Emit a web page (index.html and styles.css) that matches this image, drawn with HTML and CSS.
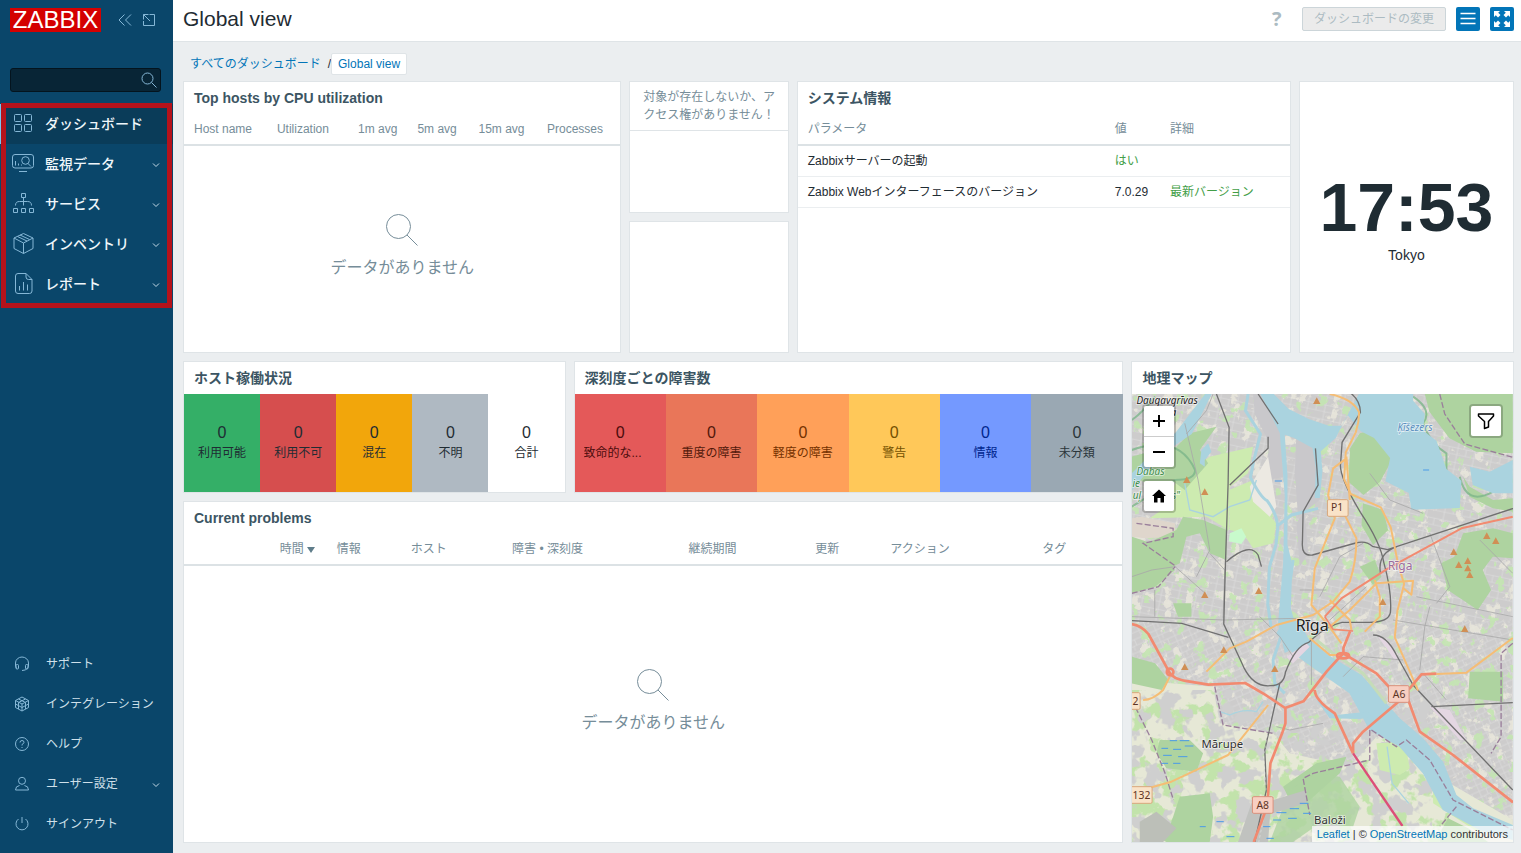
FILE: index.html
```html
<!DOCTYPE html>
<html lang="ja">
<head>
<meta charset="utf-8">
<title>Global view</title>
<link rel="stylesheet" href="styles.css">
</head>
<body>
<aside class="sidebar">
  <div class="brand">
    <a class="logo" href="#">ZABBIX</a>
    <button class="brand-btn" aria-label="サイドバーを折りたたむ"><svg width="14" height="12" viewBox="0 0 14 12"><path d="M6.500.5 1 6l5.500 5.500M13 .5 7.500 6l5.500 5.500"/></svg></button>
    <button class="brand-btn" aria-label="サイドバーを隠す"><svg width="14" height="14" viewBox="0 0 14 14"><path d="M7.500 1.500h5v11h-11V8M1.500 6.500v-5h5M1.500 1.500l6.500 6.500"/></svg></button>
  </div>
  <form class="search">
    <input class="search-input" type="text" aria-label="検索">
    <button class="search-btn" type="button" aria-label="検索"><svg width="16" height="16" viewBox="0 0 16 16"><circle cx="6.500" cy="6.500" r="5.500"/><path d="m10.500 10.500 5 5"/></svg></button>
  </form>
  <nav class="menu">
    <a class="menu-item active" href="#"><svg class="ico" viewBox="0 0 24 24"><rect x="3.500" y="2.500" width="7" height="7" rx="1"/><rect x="13.500" y="2.500" width="7" height="7" rx="1"/><rect x="3.500" y="12.500" width="7" height="7" rx="1"/><rect x="13.500" y="12.500" width="7" height="7" rx="1"/></svg><span>ダッシュボード</span></a>
    <a class="menu-item" href="#"><svg class="ico" viewBox="0 0 24 24"><rect x="1.500" y="2.500" width="21" height="13.500" rx="2.500"/><path d="M8 19.500h8M4.500 9v4.500M7.500 11.500v2M10.500 12.500v1M17 11.500l3 3"/><circle cx="14.500" cy="8.500" r="3.800"/></svg><span>監視データ</span><svg class="chev" viewBox="0 0 8 8"><path d="m1 3.500 3 3 3-3"/></svg></a>
    <a class="menu-item" href="#"><svg class="ico" viewBox="0 0 24 24"><path d="M10.500 1.500h4v4h-4zM2.500 16.500h4v4h-4zM10.500 16.500h4v4h-4zM18.500 16.500h4v4h-4zM12.500 5.500v8M4.500 13.500c0-3 1.500-4 4-4h8c2.500 0 4 1 4 4"/></svg><span>サービス</span><svg class="chev" viewBox="0 0 8 8"><path d="m1 3.500 3 3 3-3"/></svg></a>
    <a class="menu-item" href="#"><svg class="ico" viewBox="0 0 24 24"><path d="m12.500 1.500 9.500 4.500v10.500l-9.500 5-9.500-5V6zM3 6l9.500 5L22 6M12.500 11v10.500M6.500 4.500l9.500 4.500M9 3l9.500 4.500"/></svg><span>インベントリ</span><svg class="chev" viewBox="0 0 8 8"><path d="m1 3.500 3 3 3-3"/></svg></a>
    <a class="menu-item" href="#"><svg class="ico" viewBox="0 0 24 24"><path d="M15 1.500H7Q4.500 1.500 4.500 4v15q0 2.500 2.500 2.500h11.500q2.500 0 2.500-2.500V7.500zM15 1.500V5q0 2.500 2.500 2.500H21M8.500 14v4.500M12.500 10v8.500M16.500 12.500v6"/></svg><span>レポート</span><svg class="chev" viewBox="0 0 8 8"><path d="m1 3.500 3 3 3-3"/></svg></a>
  </nav>
  <nav class="menu-user">
    <a class="user-item" href="#"><svg class="ico-s" viewBox="0 0 16 16"><path d="M2.500 12.500Q1 10.500 1.500 7a6.500 6 0 0 1 13 0q.5 3.500-1 5.500M13.500 12q-1 2.500-5.500 2.500"/><rect x="2" y="8.500" width="2.500" height="4.500" rx="1"/><rect x="11.500" y="8.500" width="2.500" height="4.500" rx="1"/></svg><span>サポート</span></a>
    <a class="user-item" href="#"><svg class="ico-s" viewBox="0 0 16 16"><path d="m8 1 6.500 3.500v7L8 15l-6.500-3.500v-7zM1.500 4.500 8 8l6.500-3.500M8 8v7M4.500 3l7 3.500v6.500M11.500 3l-7 3.500v6.500M1.500 8 8 11.500 14.500 8"/></svg><span>インテグレーション</span></a>
    <a class="user-item" href="#"><svg class="ico-s" viewBox="0 0 16 16"><circle cx="8" cy="8" r="6.500"/><path d="M6 6.500Q6 4.500 8 4.500t2 1.800Q10 7.500 8 8.500v1M8 11v1"/></svg><span>ヘルプ</span></a>
    <a class="user-item" href="#"><svg class="ico-s" viewBox="0 0 16 16"><circle cx="8" cy="4.800" r="3.500"/><path d="M5.500 9.500q-4 .5-4 4.500h13q0-4-4-4.500"/></svg><span>ユーザー設定</span><svg class="chev" viewBox="0 0 8 8"><path d="m1 3.500 3 3 3-3"/></svg></a>
    <a class="user-item" href="#"><svg class="ico-s" viewBox="0 0 16 16"><path d="M4.500 3a6 6 0 1 0 7 0M8 1v6"/></svg><span>サインアウト</span></a>
  </nav>
</aside>

<main class="main">
  <header class="top">
    <h1 class="page-title">Global view</h1>
    <a class="help" href="#">?</a>
    <button class="edit" disabled>ダッシュボードの変更</button>
    <button class="tool" aria-label="アクション"><svg width="16" height="14" viewBox="0 0 16 14"><path d="M.5 1.500h15M.5 6.500h15M.5 11.500h15" stroke="#fff" stroke-width="1.500"/></svg></button>
    <button class="tool" aria-label="キオスクモード"><svg width="16" height="16" viewBox="0 0 16 16" fill="#fff"><path d="M0 0h6L4.200 1.800 6.500 4 4 6.500 1.800 4.200 0 6zM16 0v6l-1.800-1.800L12 6.500 9.500 4l2.300-2.200L10 0zM0 16v-6l1.800 1.800L4 9.500 6.500 12l-2.300 2.200L6 16zM16 16h-6l1.800-1.800L9.500 12 12 9.500l2.200 2.300L16 10z"/></svg></button>
  </header>
  <div class="crumbs"><a href="#">すべてのダッシュボード</a><span>/</span><a class="crumb-now" href="#">Global view</a></div>

  <div class="grid">
    <section class="widget w-top">
      <h2 class="w-title">Top hosts by CPU utilization</h2>
      <table class="list t-hosts">
        <colgroup><col class="h1"><col class="h2"><col class="h3"><col class="h4"><col class="h5"><col></colgroup>
        <thead><tr><th>Host name</th><th>Utilization</th><th>1m avg</th><th>5m avg</th><th>15m avg</th><th>Processes</th></tr></thead>
      </table>
      <div class="nodata"><svg width="32" height="32" viewBox="0 0 32 32"><circle cx="12.500" cy="12.500" r="12"/><path d="m21 21 10.500 10.500"/></svg><p>データがありません</p></div>
    </section>

    <section class="widget w-msg"><p class="msg">対象が存在しないか、アクセス権がありません！</p></section>
    <section class="widget w-blank"></section>

    <section class="widget w-sys">
      <h2 class="w-title">システム情報</h2>
      <table class="list t-sys">
        <colgroup><col class="s1"><col class="s2"><col></colgroup>
        <thead><tr><th>パラメータ</th><th>値</th><th>詳細</th></tr></thead>
        <tbody>
          <tr><td>Zabbixサーバーの起動</td><td class="ok">はい</td><td></td></tr>
          <tr><td>Zabbix Webインターフェースのバージョン</td><td>7.0.29</td><td class="ok">最新バージョン</td></tr>
        </tbody>
      </table>
    </section>

    <section class="widget w-clock"><time class="time">17:53</time><span class="zone">Tokyo</span></section>

    <section class="widget w-avail">
      <h2 class="w-title">ホスト稼働状況</h2>
      <div class="tiles">
        <div class="tile av-ok"><b>0</b><span>利用可能</span></div>
        <div class="tile av-no"><b>0</b><span>利用不可</span></div>
        <div class="tile av-mix"><b>0</b><span>混在</span></div>
        <div class="tile av-unk"><b>0</b><span>不明</span></div>
        <div class="tile"><b>0</b><span>合計</span></div>
      </div>
    </section>

    <section class="widget w-sev">
      <h2 class="w-title">深刻度ごとの障害数</h2>
      <div class="tiles">
        <div class="tile sv-5"><b>0</b><span>致命的な...</span></div>
        <div class="tile sv-4"><b>0</b><span>重度の障害</span></div>
        <div class="tile sv-3"><b>0</b><span>軽度の障害</span></div>
        <div class="tile sv-2"><b>0</b><span>警告</span></div>
        <div class="tile sv-1"><b>0</b><span>情報</span></div>
        <div class="tile sv-0"><b>0</b><span>未分類</span></div>
      </div>
    </section>

    <section class="widget w-prob">
      <h2 class="w-title">Current problems</h2>
      <table class="list t-prob">
        <colgroup><col class="p1"><col class="p2"><col class="p3"><col class="p4"><col class="p5"><col class="p6"><col class="p7"><col></colgroup>
        <thead><tr><th class="sorted">時間<i class="arrow"></i></th><th>情報</th><th>ホスト</th><th>障害 • 深刻度</th><th>継続期間</th><th>更新</th><th>アクション</th><th>タグ</th></tr></thead>
      </table>
      <div class="nodata"><svg width="32" height="32" viewBox="0 0 32 32"><circle cx="12.500" cy="12.500" r="12"/><path d="m21 21 10.500 10.500"/></svg><p>データがありません</p></div>
    </section>

    <section class="widget w-map">
      <h2 class="w-title">地理マップ</h2>
      <div class="map">
        <svg class="map-canvas" viewBox="6 12 1143 1344" preserveAspectRatio="xMidYMid slice">
          <defs>
            <filter id="fleck-pale" x="0" y="0" width="100%" height="100%" color-interpolation-filters="sRGB"><feTurbulence type="fractalNoise" baseFrequency=".03" numOctaves="4" seed="4"/><feColorMatrix values="0 0 0 0 .93  0 0 0 0 .92  0 0 0 0 .87  10 0 0 0 -5.800"/></filter>
            <filter id="fleck-green" x="0" y="0" width="100%" height="100%" color-interpolation-filters="sRGB"><feTurbulence type="fractalNoise" baseFrequency=".03" numOctaves="4" seed="11"/><feColorMatrix values="0 0 0 0 .77  0 0 0 0 .9  0 0 0 0 .7  0 14 0 0 -8.600"/></filter>
            <filter id="fleck-rural" x="0" y="0" width="100%" height="100%" color-interpolation-filters="sRGB"><feTurbulence type="fractalNoise" baseFrequency=".018" numOctaves="4" seed="23"/><feColorMatrix values="0 0 0 0 .76  0 0 0 0 .89  0 0 0 0 .67  0 12 0 0 -6"/></filter>
            <filter id="fleck-town" x="0" y="0" width="100%" height="100%" color-interpolation-filters="sRGB"><feTurbulence type="fractalNoise" baseFrequency=".022" numOctaves="3" seed="31"/><feColorMatrix values="0 0 0 0 .81  0 0 0 0 .81  0 0 0 0 .81  12 0 0 0 -6.200"/></filter>
            <pattern id="streets" width="46" height="38" patternUnits="userSpaceOnUse" patternTransform="rotate(-24)"><path d="M0 6h46M0 24h46M8 0v38M30 6v18M20 24v14" stroke="#dcdcdc" stroke-width="2" fill="none"/></pattern>
            <pattern id="streets-b" width="52" height="44" patternUnits="userSpaceOnUse" patternTransform="rotate(12)"><path d="M0 10h52M0 30h52M12 0v44M38 10v20" stroke="#dcdcdc" stroke-width="2" fill="none"/></pattern>
            <path id="peak" d="M0-11 11 9h-22z" fill="#d08f55"/>
          </defs>
          <rect x="6" y="12" width="1143" height="1344" fill="#cdcccc"/>
          <rect x="6" y="12" width="1143" height="680" fill="url(#streets-b)"/>
          <rect x="6" y="692" width="1143" height="664" fill="url(#streets)"/>
          <rect x="6" y="12" width="1143" height="1344" filter="url(#fleck-pale)" opacity=".75"/>
          <rect x="6" y="12" width="1143" height="1344" filter="url(#fleck-green)" opacity=".9"/>
          <path d="M6 870 250 890 270 1000 430 1030 480 1090 660 1130 740 1040 960 1180 1149 1290V1356H6z" fill="#e6e8d6"/>
          <rect x="6" y="900" width="250" height="456" filter="url(#fleck-rural)"/>
          <rect x="256" y="1030" width="250" height="326" filter="url(#fleck-rural)"/>
          <rect x="506" y="1110" width="450" height="246" filter="url(#fleck-rural)"/>
          <rect x="6" y="900" width="900" height="456" filter="url(#fleck-town)"/>
          <!-- industrial harbour -->
          <path d="M370 12h30l50 50 10 200-60 10 20-110-45-90zM500 130l60 20 15 80-5 100-65 50-10-130zM500 400l25-40 10 130-25 40z" fill="#c9c8cb"/>
          <!-- fields -->
          <path d="M240 200 370 170 355 250 300 290 298 420 230 380 60 385 110 350 140 270z" fill="#cdebb0"/>
          <path d="M298 300 370 270 390 340 440 400 430 460 370 475 340 430 300 420z" fill="#cdebb0"/>
          <path d="M360 290l55-90 10 60 15 90-20 30-50-45z" fill="#ece9e2"/>
          <path d="m300 430 35-15 14 25-14 22-38-8z" fill="#c8facc"/>
          <path d="m690 50 40 20 40 60-20 15-50-20z" fill="#cdebb0"/>
          <path d="M740 1060l85-5 15 80-30 20-60-15zM910 1180l60 60 100 70-20 20-140-90z" fill="#cdebb0"/>
          <path d="M6 385l30-5 100 20 0 40-90 5-40-5z" fill="#dfd6cc"/>
          <!-- woods -->
          <g fill="#aed3a0">
            <path d="M885 12H1149V190l-110-5-80-40-60-80zM1000 260l20 30 70 40 59-5v40l-60-10-70-35z"/>
            <path d="M690 130l60-15 36 50-5 55-30 55-50 40-45-40 5-100zM120 190l60-60 80-20-50 70 25 40-70 80-40-30zM6 200l110-30 80 90-120 30-70-30z"/>
            <path d="M6 440l60 20 70 80-60 50-70 20zM50 460l90-40 20-40 60 10 70 30 0 90-50-20-30-60-40 10-20 80-40 20zM700 340l60 20 15 60-45 45-35-60z"/>
            <path d="M1000 430l90-15 59 15v75l-60-5-30 40 25 60-40 60-90-60-20-80 40-20z"/>
            <path d="M1020 845l100 0v90l-105-10zM690 530l45-20 20 50-25 25zM560 1120l90-20-20 50-90 80-60 0-20-40z"/>
            <path d="M90 1050l90 0 40 40-20 55-90-10-30-45zM150 1220l90-10 10 70-10 76H110L60 1330l60-20z"/>
            <path d="M480 1200l80-50 70 10 60 90-20 60-100-10-80 56H420z" opacity=".8"/>
            <path d="M6 800l70 20 40 50-20 30-90-20zM130 640l55 0v40l-40 0zM935 1320l20-35 60 30 60 41H930z"/>
          </g>
          <path d="M30 1295l50-30 60 50-40 41H30z" fill="#bcbfb8"/>
          <path d="M365 1240l60-20-10 136h-90zM430 1230l100-30 0 40-100 30z" fill="#c0c2bf"/>
          <g fill="none" stroke="#7cb58a" stroke-width="6" opacity=".8"><path d="M6 180q140-50 190 60 0 30-60 30L6 350M6 90q30-20 70-70M850 20q60 40 30 80 20 60 70 90v60M990 260q20 90 100 45"/></g>
          <!-- water -->
          <g fill="#aad3df">
            <path d="M392 12h40l45 45 60 30 60 20 40 0 50-95H850l0 20 35 40-5 50 40 30 30 85 45 35-5 82-145 5-8-50-70-35 14-70-48-60-40-20-40-50-35 70-45 40 5 60-8 80-15 0 3-90-10-60-55-30-28-10 8 120 0 210 15 60-5 130 22 80 10 30-50 25-20-90 15-180 5-200-15-190z"/>
            <path d="M465 690l40-5 30 60 60 50 100 60 115 130 70 60 60 70 40 100 50 40 119 50v45l-100-30-110-60-60-110-70-80-90-50-60-110-100-70-70-50-50-60z"/>
            <path d="M1020 230l60 15 69-35v100l-60 0-60-25zM6 250l40-40 90-80 90-118h20l-60 120-90 60-90 110zM215 180l20-20 10 25-20 25 0 20-15-10z"/>
            <path d="M560 930l60 45 90-10 40 10-60 12-90-2z"/>
          </g>
          <path d="M520 760l60 50 90 90 60 70" fill="none" stroke="#aad3df" stroke-width="18"/>
          <path d="M355 12l-8 50 45 70-20 80-10 50q30 60 50 70 30 40 32 80l-5 50-20 70-5 110 10 70M440 410l45-35 80-20M490 510l-8 60M460 720l-30 90 5 70 30 30" fill="none" stroke="#aad3df" stroke-width="9"/>
          <path d="M165 280l15 80 70 20 50-30 60-20 20-60M270 965l30 10q40-20 80-10l20-30M772 1070l15 110 50 60" fill="none" stroke="#aad3df" stroke-width="4"/>
          <path d="m560 750 50 40 90 60 70 90" fill="none" stroke="#c5dcb8" stroke-width="9"/>
          <!-- rail yards -->
          <path d="M745 740l25 8 35 55-10 8zM900 950l60 10 50 90-20 0zM470 800l60-40 10 10-50 50z" fill="#e4d6e2"/>
          <!-- minor roads -->
          <g fill="none" stroke="#a8a8a8" stroke-width="2.500">
            <path d="M165 100l40 170 35 210-40 80M240 490l45 50-5 145M6 560l60-20 70-10 90 80M75 600v80M6 680l280 10 220-5M510 600h80M790 690l359 60M860 620l289 60M900 650l-15 60-15 130M900 430l60 160-40 50M720 250l60 80 100 40M880 850l70 80M1050 450l99 100M545 745v140M390 680l60 60 40 60M600 690l110-100M640 860l60-60 120 10M250 12l-20 50-60 70M570 620l60-120 70-40M580 1000l-100 20-40-10"/>
          </g>
          <!-- boundaries -->
          <g fill="none" stroke="#9a7f9b" stroke-width="4" stroke-dasharray="18 7"><path d="M930 12l15 60 60 90 144 40M20 400l110 15v25l-90 20 100 70M6 610l80-20 50-60M255 890l25 115 150 25M6 930l60 120 40 100 25 80M720 1020v90l-170 40-30 15 20 110M725 1020l75 50 30-20 70 60 70 120 179 90M980 1250l-50 60M1149 760l-35 30 0 250-30 50"/></g>
          <!-- railways -->
          <g fill="none" stroke="#707070" stroke-width="4">
            <path d="M260 12l38 100-3 170-8 240-5 180 60 130q30 60 80 55 40 0 45-40 30-80 70-90 50-50 100-60l80 0q60 0 65-30 5-60-20-150-10-60-70-150-60-100-60-140l5-70 55-90q0-60-90-88"/>
            <path d="M6 692l150 8 140 42M290 515q70-60 95-20l10 35M300 285l115-110v-35M557 175l8 110-45 80-2 90q-4 45 30 40l130-36q30-8 50 10l45 10 396-130M752 550q-10-60 50-80M730 735q40 0 70 60l50 90 70 75 229 240M905 950l244-12M450 880l-45 200 5 120-35 156M385 12l60 90"/>
          </g>
          <path d="M430 940l-28 160 10 130-25 126" fill="none" stroke="#fff" stroke-width="1" stroke-dasharray="8 8"/>
          <!-- secondary roads -->
          <g fill="none" stroke="#f5bd75" stroke-width="6" stroke-linejoin="round">
            <path d="M600 12q70 15 88 55 0 30-10 60l-30 60-5 80 20 45 90 40 30 60 22 110 18 60-20 80-8 80 70 160M650 205l-40 30-15 80 20 70-60 150-10 110 50 60 40 55M645 375l35 70q0 70-20 130l-50 60-60 40-110 30-90 50-50 20-70 70M650 200l10 130"/>
            <path d="M600 630l60 60 5 30M600 710l60-50 80-80 110-8-5 42-25-20M735 570l15 50 0 60-45 45M540 745l60 50 40 0M920 852l90-4 139-104M120 860l-20 40q-30 30-60 30M415 945l-80 100-40 50-170 80-70 20"/>
          </g>
          <!-- trunk roads -->
          <g fill="none" stroke="#f28a70" stroke-width="8" stroke-linejoin="round">
            <path d="M6 702q30 5 50 30l60 110q10 25 60 32l60 10 110-5 60 35 60 40 55-20 70-90 50-55 0-15 20-50M640 790l100 60 60 65 40-20 35-42 45-2M555 900q0 30 60 70l55 120M670 1090l0-30 30-35 130-110 40 110 100 70 180 142M467 950v50l-10 30-35 90-10 130-40 106"/>
            <path d="M585 680l50-55 140-90 220-120 154-35" stroke-width="6"/><path d="M585 680l25 38 60 5" stroke-width="5"/>
            <circle cx="121" cy="846" r="10"/><ellipse cx="640" cy="797" rx="18" ry="8"/>
          </g>
          <path d="M670 1090l148 218" fill="none" stroke="#dc4f78" stroke-width="7"/>
          <g stroke="#4a9be8" stroke-width="3"><path d="M120 1052h22M150 1052h28M95 1075h20M130 1078h24M165 1068h26M100 1096h26M145 1100h28M95 1120h20M130 1120h22M440 1268h30M480 1256h28M430 1290h24M475 1285h26M400 1310h22M510 1240h26M520 1270h24M260 1295h22M290 1340h24M210 1310h18M410 1345h22M435 273h22M880 240h18M1080 130h16"/></g>
          <g><use href="#peak" x="561" y="33"/><use href="#peak" x="171" y="270"/><use href="#peak" x="225" y="306"/><use href="#peak" x="1071" y="438"/><use href="#peak" x="1098" y="453"/><use href="#peak" x="972" y="486"/><use href="#peak" x="1014" y="513"/><use href="#peak" x="987" y="525"/><use href="#peak" x="1014" y="535"/><use href="#peak" x="1020" y="555"/><use href="#peak" x="225" y="615"/><use href="#peak" x="387" y="603"/><use href="#peak" x="759" y="636"/><use href="#peak" x="1005" y="717"/><use href="#peak" x="282" y="780"/><use href="#peak" x="165" y="831"/><use href="#peak" x="435" y="837"/></g>
          <!-- road shields -->
          <g class="shield"><rect x="593" y="329" width="62" height="50" rx="4" fill="#f9e3c8" stroke="#d9a87c"/><rect x="776" y="887" width="62" height="50" rx="4" fill="#f7cfc2" stroke="#d9917c"/><rect x="368" y="1220" width="62" height="50" rx="4" fill="#f7cfc2" stroke="#d9917c"/><rect x="-20" y="1190" width="87" height="50" rx="4" fill="#f9e3c8" stroke="#d9a87c"/><rect x="-20" y="908" width="51" height="50" rx="4" fill="#f9e3c8" stroke="#d9a87c"/>
            <text x="622" y="364">P1</text><text x="808" y="924">A6</text><text x="399" y="1256">A8</text><text x="35" y="1227">132</text><text x="17" y="944">2</text></g>
          <g class="place"><text x="498" y="724" class="city">Rīga</text><text x="774" y="540" class="region">Rīga</text><text x="215" y="1075">Mārupe</text><text x="553" y="1302">Baloži</text><text x="803" y="124" class="lake">Ķīšezers</text><text x="20" y="43" class="isle">Daugavgrīvas</text><text x="122" y="79" class="isle">a</text><text x="20" y="255" class="nature">Dabas</text><text x="8" y="291" class="nature">ie</text><text x="9" y="327" class="nature">uļ</text><text x="126" y="327" class="nature">s"</text></g>
        </svg>
        <div class="ctl ctl-left">
          <div class="ctl-box"><button aria-label="拡大"><svg width="14" height="14" viewBox="0 0 14 14"><path d="M1 7h12M7 1v12" stroke="#000" stroke-width="2"/></svg></button><button aria-label="縮小"><svg width="14" height="14" viewBox="0 0 14 14"><path d="M1 7h12" stroke="#000" stroke-width="2"/></svg></button></div>
          <div class="ctl-box"><button aria-label="初期表示"><svg width="14" height="14" viewBox="0 0 14 14"><path d="M7 .5 14 7h-2v6.500H8.500V9h-3v4.500H2V7H0z"/></svg></button></div>
        </div>
        <div class="ctl ctl-right"><div class="ctl-box"><button aria-label="フィルター"><svg width="18" height="18" viewBox="0 0 18 18"><path d="M1.500 2h15v2l-5 5.500V15l-4 1.500v-7l-6-5.500z" fill="none" stroke="#000" stroke-width="1.500" stroke-linejoin="round"/></svg></button></div></div>
        <div class="attrib"><a href="#">Leaflet</a> | © <a href="#">OpenStreetMap</a> contributors</div>
      </div>
    </section>
  </div>
</main>
</body>
</html>
```
FILE: styles.css
```css
* { box-sizing: border-box; }
body {
  margin: 0;
  min-height: 100vh;
  display: flex;
  background: #ebeef0;
  color: #1f2c33;
  font: 12px/18px "Liberation Sans", "Noto Sans CJK JP", sans-serif;
}
h1, h2, p { margin: 0; }
a { color: #0275b8; text-decoration: none; }
button { font: inherit; padding: 0; border: 0; cursor: pointer; }

/* sidebar */
.sidebar {
  flex: 0 0 173px;
  display: flex;
  flex-direction: column;
  background: #0a466a;
  padding-bottom: 9px;
}
.sidebar svg { fill: none; stroke: #85b7d6; flex: none; }
.brand { display: flex; align-items: center; padding: 8px 0 0 10px; }
.sidebar .logo {
  width: 91px;
  margin-right: 17px;
  background: #d40000;
  color: #fff;
  font-size: 24px;
  line-height: 24px;
  text-align: center;
}
.brand-btn { display: flex; background: none; margin-right: 10px; }
.search { position: relative; margin: 36px 12px 12px 10px; }
.search-input {
  display: block;
  width: 100%;
  height: 24px;
  padding: 0 28px 0 6px;
  border: 1px solid #04141e;
  border-radius: 3px;
  background: #082536;
  color: #fff;
}
.search-btn { position: absolute; right: 4px; top: 4px; display: flex; background: none; }
.menu { position: relative; }
.menu::after {
  content: "";
  position: absolute;
  inset: -1px 1px -4px 1px;
  border: 5px solid #b5121b;
  pointer-events: none;
}
.menu-item, .user-item {
  display: flex;
  align-items: center;
  height: 40px;
  padding: 0 13px 0 11px;
  color: #eff6fa;
}
.menu-item { gap: 10px; font-size: 14px; font-weight: 500; }
.user-item { gap: 16px; padding-left: 14px; color: #cfe0ea; }
.active { background: #0a3c59; box-shadow: inset 1px 0 #7cc3ee; }
.ico { width: 24px; height: 24px; }
.ico-s { width: 16px; height: 16px; }
.chev { width: 8px; height: 8px; margin-left: auto; }
.sidebar .chev { stroke: #c3d9e6; }
.menu-user { margin-top: auto; }

/* page header */
.main { flex: 1; min-width: 0; }
.top {
  display: flex;
  align-items: center;
  gap: 10px;
  padding: 7px 7px 10px 10px;
  background: #fff;
  border-bottom: 1px solid #dfe4e7;
}
.page-title { flex: 1; font-size: 21px; line-height: 24px; font-weight: 400; }
.help { width: 20px; color: #acbbc2; font: 700 20px/24px "Open Sans", sans-serif; }
.edit {
  height: 24px;
  padding: 0 11px;
  border: 1px solid #ccd5d9;
  border-radius: 2px;
  background: #ebebeb;
  color: #acbbc2;
}
.tool {
  width: 24px;
  height: 24px;
  display: grid;
  place-items: center;
  border-radius: 2px;
  background: #0275b8;
}
.tool + .tool, .edit { margin-left: 0; }
.crumbs { display: flex; align-items: center; padding: 11px 0 2px 17px; }
.crumbs span { margin-left: 7px; }
.crumb-now {
  padding: 1px 6px;
  border: 1px solid #dfe4e7;
  border-radius: 2px;
  background: #fff;
}

/* dashboard */
.grid {
  display: grid;
  grid-template-columns: repeat(72, minmax(0, 1fr));
  grid-auto-rows: minmax(70px, auto);
  margin: 0 3px 0 6px;
}
.widget {
  margin: 4px;
  display: flex;
  flex-direction: column;
  min-width: 0;
  background: #fff;
  border: 1px solid #dfe4e7;
}
.w-top { grid-area: 1 / 1 / span 4 / span 24; }
.w-msg { grid-area: 1 / 25 / span 2 / span 9; }
.w-blank { grid-area: 3 / 25 / span 2 / span 9; }
.w-sys { grid-area: 1 / 34 / span 4 / span 27; }
.w-clock { grid-area: 1 / 61 / span 4 / span 12; align-items: center; justify-content: center; }
.w-avail { grid-area: 5 / 1 / span 2 / span 21; }
.w-sev { grid-area: 5 / 22 / span 2 / span 30; }
.w-prob { grid-area: 7 / 1 / span 5 / span 51; }
.w-map { grid-area: 5 / 52 / span 7 / span 21; }
.w-title { padding: 0 10px; font-size: 14px; line-height: 32px; color: #3c5563; }

.list { width: 100%; border-collapse: collapse; table-layout: fixed; }
.list th, .list td { padding: 6px 0 6px 10px; text-align: left; line-height: 18px; white-space: nowrap; }
.list th { font-weight: 400; color: #768d99; border-bottom: 2px solid #dce2e5; }
.list td { border-bottom: 1px solid #ebeef0; }
.list .ok { color: #429e47; }
.h1 { width: 19%; } .h2 { width: 18.6%; } .h3 { width: 13.6%; } .h4 { width: 14%; } .h5 { width: 15.7%; }
.s1 { width: 62.4%; } .s2 { width: 11.2%; }
.p1 { width: 15.2%; } .p2 { width: 7.9%; } .p3 { width: 10.8%; } .p4 { width: 18.8%; }
.p5 { width: 13.5%; } .p6 { width: 8%; } .p7 { width: 16.2%; }
.list .sorted { text-align: right; padding-right: 12px; }
.arrow {
  display: inline-block;
  margin-left: 3px;
  border: 4px solid transparent;
  border-top: 6px solid #5f7d8a;
  border-bottom: 0;
}
.nodata {
  flex: 1;
  display: flex;
  flex-direction: column;
  align-items: center;
  justify-content: center;
  gap: 10px;
  padding-bottom: 4px;
  color: #768d99;
  font-size: 16px;
  line-height: 24px;
}
.nodata svg { fill: none; stroke: #768d99; }
.msg { padding: 6px 10px; text-align: center; color: #768d99; border-bottom: 1px solid #dfe4e7; }
.time { font-size: 68px; line-height: 76px; font-weight: 700; }
.zone { font-size: 14px; line-height: 20px; }

.tiles { flex: 1; display: flex; }
.tile {
  flex: 1 1 0;
  min-width: 0;
  padding: 0 9px;
  display: flex;
  flex-direction: column;
  justify-content: center;
  text-align: center;
  line-height: 20px;
}
.tile b { font-size: 16px; font-weight: 400; }
.tile span { overflow: hidden; text-overflow: ellipsis; white-space: nowrap; }
.av-ok { background: #34af67; }
.av-no { background: #d64e4e; }
.av-mix { background: #f2a60b; }
.av-unk { background: #afb9c2; }
.sv-5 { background: #e45959; color: #4b0c0c; }
.sv-5 span { text-align: left; }
.sv-4 { background: #e97659; color: #52190b; }
.sv-3 { background: #ffa059; color: #733100; }
.sv-2 { background: #ffc859; color: #735000; }
.sv-1 { background: #7499ff; color: #00268e; }
.sv-0 { background: #9aa8b3; color: #2a353a; }

/* map */
.map { flex: 1; position: relative; overflow: hidden; }
.map-canvas { position: absolute; inset: 0; width: 100%; height: 100%; }
.map-canvas text { font-family: "Noto Sans", sans-serif; paint-order: stroke; }
.shield { font-size: 31px; text-anchor: middle; fill: #5d3425; stroke-width: 3px; }
.place { font-size: 34px; fill: #333; stroke: #fff; stroke-opacity: .6; stroke-width: 5px; }
.place .city { font-size: 48px; fill: #222; }
.place .region { font-size: 36px; fill: #9b6d9e; }
.place .lake { font-size: 30px; font-style: italic; fill: #5b8fc0; }
.place .isle { font-size: 30px; font-style: italic; fill: #222; }
.place .nature { font-size: 30px; font-style: italic; fill: #3d8c4c; }
.ctl { position: absolute; top: 10px; display: flex; flex-direction: column; gap: 10px; }
.ctl-left { left: 10px; }
.ctl-right { right: 10px; }
.ctl-box { border: 2px solid rgba(0, 0, 0, .2); border-radius: 4px; background-clip: padding-box; overflow: hidden; }
.ctl-box button { display: grid; place-items: center; width: 30px; height: 30px; background: #fff; }
.ctl-box button + button { height: 31px; border-top: 1px solid #ccc; }
.attrib {
  position: absolute;
  right: 0;
  bottom: 0;
  padding: 0 5px;
  background: rgba(255, 255, 255, .7);
  color: #333;
  font-size: 11px;
  line-height: 16px;
}
```
